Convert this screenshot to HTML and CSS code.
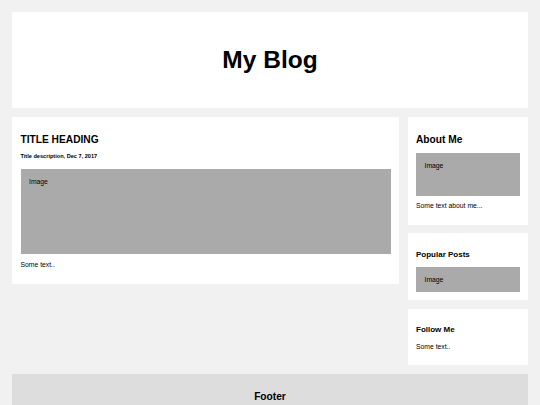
FILE: index.html
```html
<!DOCTYPE html>
<html lang="en">
<head>
<meta charset="utf-8">
<title>My Blog</title>
<link rel="stylesheet" href="styles.css">
</head>
<body>
<div class="page">
  <header class="header">
    <h1 class="brand">My Blog</h1>
  </header>
  <div class="row">
    <main class="leftcolumn">
      <section class="card">
        <h2 class="card-title">TITLE HEADING</h2>
        <h5 class="card-meta">Title description, Dec 7, 2017</h5>
        <div class="fakeimg fakeimg-large">Image</div>
        <p class="card-text">Some text..</p>
      </section>
    </main>
    <aside class="rightcolumn">
      <section class="card">
        <h2 class="card-title">About Me</h2>
        <div class="fakeimg fakeimg-medium">Image</div>
        <p class="card-text">Some text about me...</p>
      </section>
      <section class="card">
        <h3 class="card-subtitle">Popular Posts</h3>
        <div class="fakeimg">Image</div>
      </section>
      <section class="card">
        <h3 class="card-subtitle">Follow Me</h3>
        <p class="card-text">Some text..</p>
      </section>
    </aside>
  </div>
  <footer class="footer">
    <h2 class="footer-title">Footer</h2>
  </footer>
</div>
</body>
</html>
```

FILE: styles.css
```css
* {
  box-sizing: border-box;
}

html, body {
  margin: 0;
  padding: 0;
  background: #f1f1f1;
}

body {
  font-family: "Liberation Sans", Arial, sans-serif;
  color: #000;
}

.page {
  padding: 12px 12px 0;
}

.header {
  background: #fff;
  height: 96px;
  display: flex;
  align-items: center;
  justify-content: center;
}

.brand {
  margin: 0;
  font-size: 24.5px;
  font-weight: bold;
  line-height: 1;
}

.row {
  display: flex;
  align-items: flex-start;
}

.leftcolumn {
  width: 75%;
}

.rightcolumn {
  width: 25%;
  padding-left: 8.5px;
}

.card {
  background: #fff;
  padding: 8.5px;
  margin-top: 8.5px;
}

.card-title {
  margin: 8.5px 0 7.5px;
  font-size: 10.2px;
  line-height: 12px;
  font-weight: bold;
}

.card-meta {
  margin: 7.6px 0 9.4px;
  font-size: 5.6px;
  line-height: 7px;
  font-weight: bold;
}

.card-subtitle {
  margin: 8px 0;
  font-size: 8px;
  line-height: 9.2px;
  font-weight: bold;
}

.card-text {
  margin: 6.5px 0;
  font-size: 6.8px;
  line-height: 7.8px;
}

.fakeimg {
  background: #aaa;
  width: 100%;
  padding: 8.5px;
  font-size: 6.8px;
  line-height: 7.8px;
}

.fakeimg-large {
  height: 85px;
}

.fakeimg-medium {
  height: 42.5px;
}

.footer {
  background: #ddd;
  margin-top: 8.5px;
  padding: 8.5px;
  text-align: center;
}

.footer-title {
  margin: 8.5px 0;
  font-size: 10.2px;
  line-height: 12px;
  font-weight: bold;
}
```
